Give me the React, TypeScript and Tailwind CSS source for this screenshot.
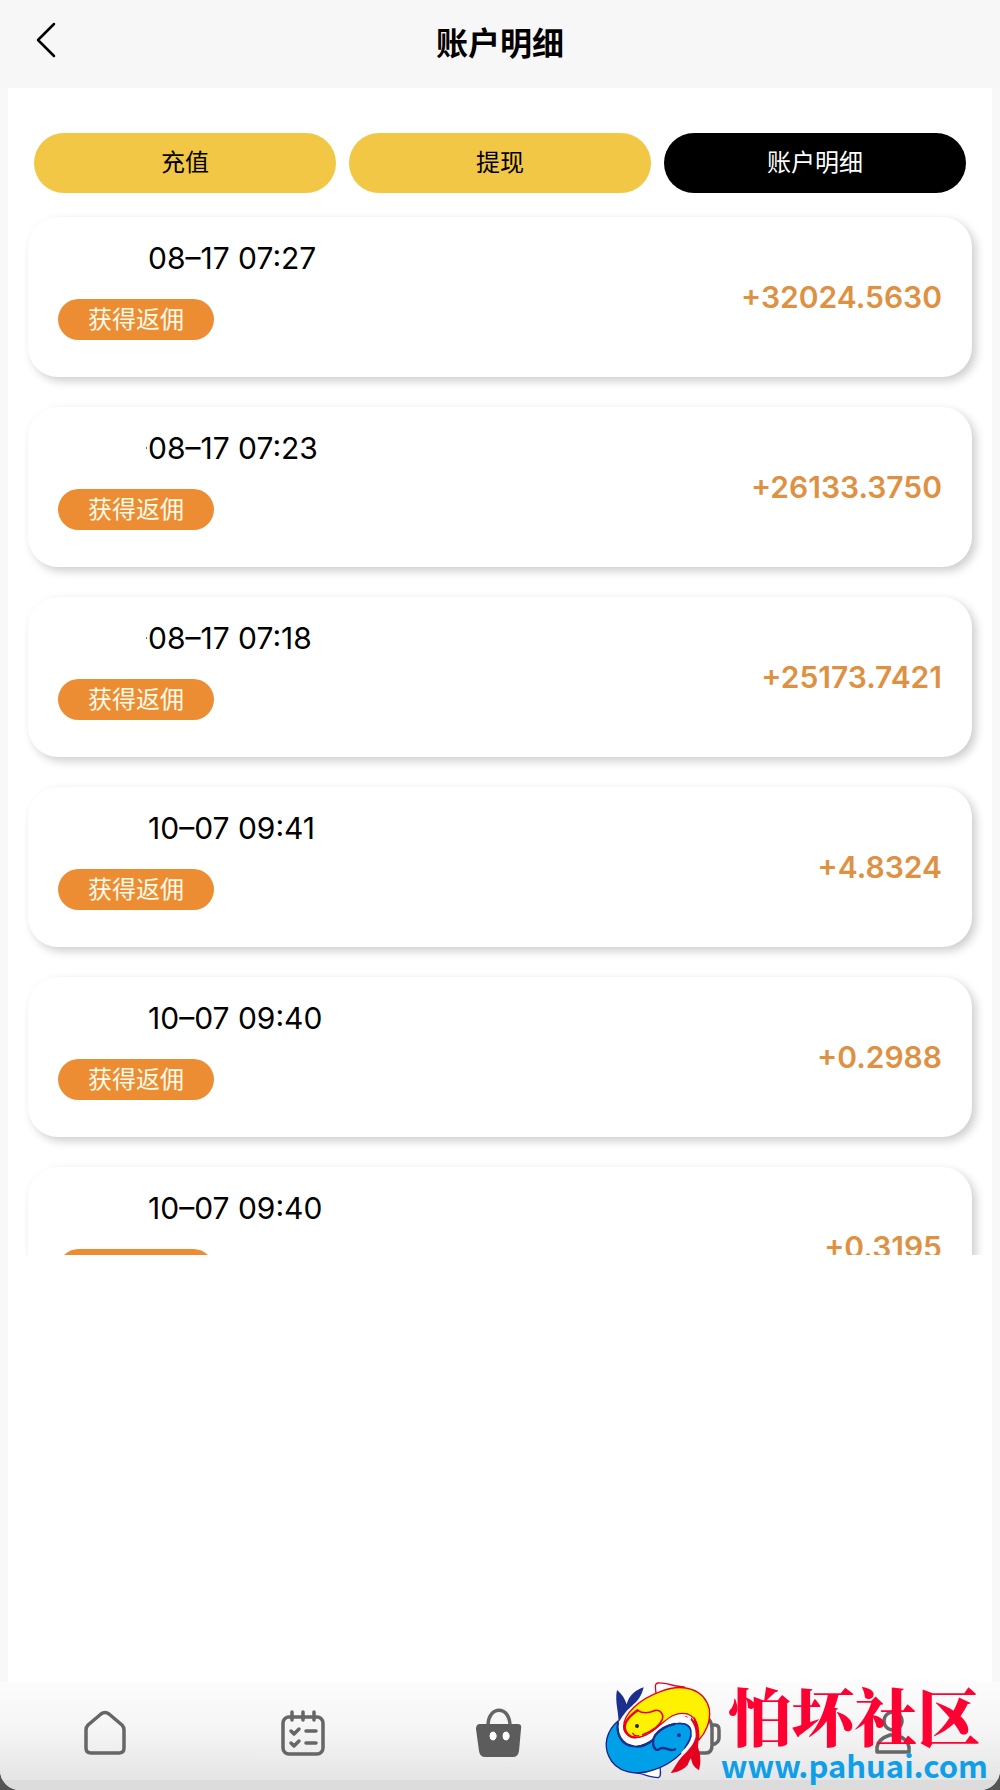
import type { ReactNode } from 'react';

interface Entry {
  id: number;
  time: string;
  amount: string;
  dotted?: boolean;
}

const ENTRIES: Entry[] = [
  { id: 1, time: '08–17 07:27', amount: '+32024.5630' },
  { id: 2, time: '08–17 07:23', amount: '+26133.3750', dotted: true },
  { id: 3, time: '08–17 07:18', amount: '+25173.7421', dotted: true },
  { id: 4, time: '10–07 09:41', amount: '+4.8324' },
  { id: 5, time: '10–07 09:40', amount: '+0.2988' },
  { id: 6, time: '10–07 09:40', amount: '+0.3195' },
];

const TABS = ['充值', '提现', '账户明细'];

function EntryCard({ entry }: { entry: Entry }) {
  return (
    <li className="flex h-40 items-center justify-between rounded-[30px] bg-white px-[30px] shadow-[4px_4px_10px_rgba(0,0,0,0.2)]">
      <div className="flex h-full flex-col items-start pt-[23px]">
        <div className="flex items-center pl-[88px]">
          <span className={entry.dotted ? 'mr-px h-0.5 w-px bg-gray-500' : 'mr-px h-0.5 w-px'} />
          <time className="font-['Inter',sans-serif] text-[30px] leading-9">{entry.time}</time>
        </div>
        <span className="mt-[23px] flex h-[41px] w-[156px] items-center justify-center rounded-full bg-[#ec8d33] text-2xl text-[#fffbe8]">
          获得返佣
        </span>
      </div>
      <span className="font-['Inter',sans-serif] text-[30px] leading-10 font-semibold text-[#df9143]">
        {entry.amount}
      </span>
    </li>
  );
}

function NavItem({ label, children }: { label: string; children: ReactNode }) {
  return (
    <a href="#" aria-label={label} className="flex flex-1 justify-center">
      <svg viewBox="0 0 50 54" className="h-[54px] w-[50px]" fill="none" stroke="#666" strokeWidth="3.5" strokeLinecap="round" strokeLinejoin="round">
        {children}
      </svg>
    </a>
  );
}

function FishLogo() {
  return (
    <svg viewBox="40 30 360 300" className="h-[100px] w-[120px] shrink-0" fill="none" strokeLinejoin="round" strokeLinecap="round">
      <path d="M108 150 C150 90 240 90 325 130 C345 190 310 240 250 280 C180 270 90 240 90 170 Z" fill="#fff" />
      <path d="M205 75 C205 55 198 41 211 39 C236 37 258 50 290 51" fill="#fff" stroke="#e60020" strokeWidth="4" />
      <path d="M143 308 C165 310 185 323 212 323 C222 320 218 305 217 288" fill="#fff" stroke="#1c2f8f" strokeWidth="4" />
      {/* blue fish */}
      <path d="M92 158 C95 130 80 95 88 60 C102 72 110 82 117 103 C124 75 145 60 168 52 C162 78 150 94 130 110 C112 125 104 140 92 158 Z" fill="#1c2f8f" />
      <path d="M91 153 C56 182 48 225 63 258 C84 308 147 320 200 299 C247 284 293 248 312 205 C321 178 302 159 273 160 C241 160 211 181 195 206 C165 232 125 238 103 213 C88 195 87 176 91 153 Z" fill="#00a0e9" stroke="#1c2088" strokeWidth="4" />
      <path d="M91 160 C86 192 101 224 136 228 C159 235 182 223 195 210" stroke="#1c2f8f" strokeWidth="7" />
      <path d="M96 166 C95 190 111 216 139 223 C165 225 184 211 198 200" stroke="#fff" strokeWidth="6" />
      <path d="M262 238 C246 245 240 234 225 234 C214 234 213 242 205 239 C193 230 194 207 203 195 C219 175 241 166 261 162" stroke="#1c2f8f" strokeWidth="7" />
      <path d="M270 161 C306 157 316 178 307 207 L292 234" stroke="#1c2f8f" strokeWidth="5" />
      <circle cx="274" cy="196" r="6" fill="#1c2f8f" />
      {/* yellow fish */}
      <path d="M108 171 C106 133 154 88 218 65 C286 38 350 56 365 117 C370 155 353 190 333 211 C334 174 331 145 300 132 C262 122 237 149 211 170 C186 192 161 206 135 202 C116 195 107 184 108 171 Z" fill="#fff200" stroke="#e60020" strokeWidth="4" />
      <path d="M150 121 C166 132 184 129 200 122 C216 117 229 131 224 148 C216 168 189 185 165 194" stroke="#e60020" strokeWidth="5" />
      <path d="M150 121 C124 139 103 162 115 185 C121 197 132 202 143 202" stroke="#e60020" strokeWidth="7" />
      <path d="M135 190 C140 198 147 199 153 197" stroke="#e60020" strokeWidth="4" />
      <circle cx="148" cy="168" r="6" fill="#222" />
      <path d="M284 137 C310 140 326 166 324 200 C319 224 303 239 284 259 C269 275 262 293 249 309 C266 307 285 302 300 285 C303 277 306 270 310 265 C313 283 320 292 334 301 C342 273 337 248 331 232 C336 186 329 154 320 140 L318 152 L311 141 L309 151 L298 139 Z" fill="#e60020" />
      <path d="M288 143 C307 152 318 172 316 199 C312 217 300 235 284 249" stroke="#fff" strokeWidth="7" />
    </svg>
  );
}

export default function App() {
  return (
    <div className="relative flex min-h-screen flex-col overflow-hidden bg-[#555]">
      <div className="flex flex-1 flex-col overflow-hidden rounded-b-[20px] bg-[#f8f8f8] font-['Liberation_Sans','Noto_Sans_CJK_SC',sans-serif] text-black">
        <header className="grid h-[88px] grid-cols-[1fr_auto_1fr] items-center bg-[#f7f7f7] px-7">
          <button type="button" aria-label="返回" className="mb-2 flex h-10 w-9 items-center justify-center">
            <svg viewBox="0 0 20 36" className="h-9 w-5" fill="none" stroke="#000" strokeWidth="2.5" strokeLinecap="round" strokeLinejoin="round">
              <path d="M18 2 L2 18 L18 34" />
            </svg>
          </button>
          <h1 className="text-[32px] leading-10 font-bold">账户明细</h1>
        </header>

        <main className="mx-2 flex-1 bg-white">
          <div role="tablist" className="grid grid-cols-3 gap-[13px] px-[26px] pt-[45px]">
            {TABS.map((tab) => (
              <button
                key={tab}
                type="button"
                role="tab"
                aria-selected={tab === '账户明细'}
                className="h-[60px] rounded-full bg-[#f3c746] text-2xl aria-selected:bg-black aria-selected:text-white"
              >
                {tab}
              </button>
            ))}
          </div>
          <ul className="flex h-[1062px] flex-col gap-[30px] overflow-hidden px-5 pt-6 *:shrink-0">
            {ENTRIES.map((entry) => (
              <EntryCard key={entry.id} entry={entry} />
            ))}
          </ul>
        </main>

        <nav className="flex h-[108px] items-start border-b-[10px] border-[#dcdcdc] bg-linear-to-b from-[#fcfcfc] via-[#f5f5f5] to-[#e5e5e5] px-[7px] pt-[26px]">
          <NavItem label="首页">
            <path d="M5 22 Q5 19 7 17 L20 6 Q24 3 28 6 L41 17 Q43 19 43 22 V40 Q43 45 38 45 H10 Q5 45 5 40 Z" />
          </NavItem>
          <NavItem label="任务">
            <rect x="5" y="9" width="40" height="37" rx="6" />
            <path d="M14 4 V12 M25 4 V12 M36 4 V12" />
            <path d="M13 23 L16 26 L21 21 M13 35 L16 38 L21 33 M28 23 H38 M28 35 H38" />
          </NavItem>
          <NavItem label="商城">
            <path d="M13 18 C13 -3 35 -3 35 18" />
            <path d="M5 16 H43 Q47 16 46 21 L44 43 Q43 49 38 49 H10 Q5 49 4 43 L1 21 Q1 16 5 16 Z" fill="#5c5c5c" stroke="none" />
            <ellipse cx="18" cy="28" rx="3" ry="4" fill="#fff" stroke="#fff" strokeWidth="1" />
            <ellipse cx="31" cy="28" rx="3" ry="4" fill="#fff" stroke="#fff" strokeWidth="1" />
          </NavItem>
          <NavItem label="客服">
            <path d="M9 22 C7 0 39 0 40 20 V36 M40 17 H43 Q47 17 47 22 V30 Q47 35 40 37 M40 37 Q40 45 34 45 H26" />
          </NavItem>
          <NavItem label="我的">
            <circle cx="24" cy="13" r="9" />
            <path d="M8 44 V39 C9 32 15 29 21 27 H27 C33 29 39 32 40 39 V44 Z" />
          </NavItem>
        </nav>
      </div>

      {/* site mark laid over the bottom bar */}
      <div className="pointer-events-none absolute right-3 bottom-2 flex items-start">
        <FishLogo />
        <div className="flex flex-col items-center">
          <span className="font-['Noto_Serif_CJK_SC','Noto_Sans_CJK_SC',serif] text-[63px] leading-[68px] font-black text-[#ff0033]">
            怕坏社区
          </span>
          <span className="font-['Noto_Sans_CJK_SC',sans-serif] text-[31px] leading-[34px] font-bold text-[#0f9fe8]">
            www.pahuai.com
          </span>
        </div>
      </div>
    </div>
  );
}
